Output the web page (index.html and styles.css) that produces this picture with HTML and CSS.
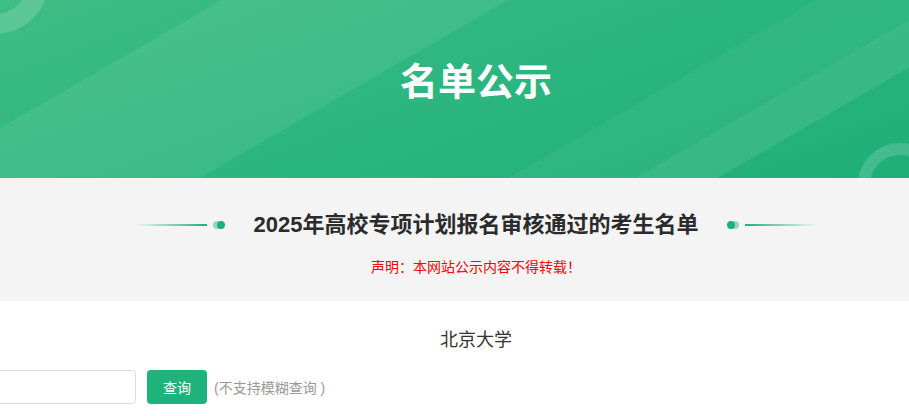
FILE: index.html
```html
<!DOCTYPE html>
<html lang="zh-CN">
<head>
  <meta charset="UTF-8" />
  <meta name="viewport" content="width=device-width, initial-scale=1.0"/>
  <title>名单公示</title>
  <link rel="stylesheet" href="styles.css">
</head>
<body>
  <div class="page">
    <div class="banner">
      <span class="ring ring-tl"></span>
      <span class="ring ring-br"></span>
      <h1>名单公示</h1>
    </div>

    <div class="intro">
      <div class="title-row">
        <span class="deco deco-left"><i class="deco-line"></i><i class="deco-dot"></i></span>
        <h2>2025年高校专项计划报名审核通过的考生名单</h2>
        <span class="deco deco-right"><i class="deco-dot"></i><i class="deco-line"></i></span>
      </div>
      <p class="notice">声明：本网站公示内容不得转载！</p>
    </div>

    <div class="result">
      <div class="school">北京大学</div>
      <div class="container">
        <form class="query-form" onsubmit="return false;">
          <input type="text" class="query-input">
          <button type="submit" class="query-btn">查询</button>
          <span class="query-tip">(不支持模糊查询 )</span>
        </form>
      </div>
    </div>
  </div>
</body>
</html>
```

FILE: styles.css
```css
body {
  margin: 0;
  font-family: "Liberation Sans", "Noto Sans CJK SC", sans-serif;
  color: #333;
  background: #fff;
  overflow: hidden;
}
.page {
  width: 952px;
}
.banner {
  position: relative;
  height: 178px;
  overflow: hidden;
  display: flex;
  justify-content: center;
  align-items: center;
  background:
    linear-gradient(150deg, transparent 17.6%, rgba(255,255,255,0.07) 17.6%, rgba(255,255,255,0.07) 40.3%, transparent 40.3%),
    linear-gradient(150deg, transparent 64.8%, rgba(255,255,255,0.04) 64.8%, rgba(255,255,255,0.04) 74.9%, transparent 74.9%),
    linear-gradient(150deg, transparent 74.9%, rgba(255,255,255,0.09) 74.9%, rgba(255,255,255,0.09) 81.4%, transparent 81.4%),
    linear-gradient(160deg, #3ebd84 0%, #2db680 45%, #1fae78 100%);
}
.banner h1 {
  margin: 0 0 22px;
  font-size: 38px;
  font-weight: bold;
  color: #fff;
}
.ring {
  position: absolute;
  border-radius: 50%;
  border-style: solid;
  border-color: rgba(255,255,255,0.16);
}
.ring-tl {
  left: -59px;
  top: -74px;
  width: 68px;
  height: 68px;
  border-width: 20px;
}
.ring-br {
  left: 858px;
  top: 143px;
  width: 60px;
  height: 60px;
  border-width: 12px;
}
.intro {
  background: #f4f4f4;
  padding: 32px 0 24px;
  text-align: center;
}
.title-row {
  display: flex;
  justify-content: center;
  align-items: center;
}
.title-row h2 {
  margin: 0 29px;
  font-size: 22px;
  line-height: 30px;
  font-weight: bold;
  color: #2b2b2b;
}
.deco {
  display: flex;
  align-items: center;
}
.deco-line {
  display: block;
  width: 72px;
  height: 2px;
}
.deco-left .deco-line {
  background: linear-gradient(to right, rgba(29,176,122,0), #1db07a);
  margin-right: 10px;
}
.deco-right .deco-line {
  background: linear-gradient(to left, rgba(29,176,122,0), #1db07a);
  margin-left: 10px;
}
.deco-dot {
  display: block;
  width: 8px;
  height: 8px;
  border-radius: 50%;
  background: #1db07a;
}
.deco-left .deco-dot {
  box-shadow: -4px 0 0 rgba(29,176,122,0.45);
}
.deco-right .deco-dot {
  box-shadow: 4px 0 0 rgba(29,176,122,0.45);
}
.notice {
  margin: 17px 0 0;
  font-size: 14px;
  line-height: 20px;
  color: #f00;
}
.result {
  padding-top: 26px;
}
.school {
  text-align: center;
  font-size: 18px;
  line-height: 26px;
  color: #333;
}
.container {
  display: flex;
  justify-content: center;
  margin-top: 17px;
}
.query-form {
  flex: 0 0 1200px;
  display: flex;
  align-items: center;
}
.query-input {
  width: 260px;
  height: 34px;
  box-sizing: border-box;
  border: 1px solid #ddd;
  border-radius: 4px;
  padding: 0 10px;
  font-size: 14px;
  outline: none;
}
.query-btn {
  margin-left: 11px;
  width: 60px;
  height: 34px;
  border: none;
  border-radius: 4px;
  background: #1db37a;
  color: #fff;
  font-size: 14px;
  font-family: inherit;
  cursor: pointer;
}
.query-tip {
  margin-left: 7px;
  font-size: 14px;
  color: #999;
}
```
